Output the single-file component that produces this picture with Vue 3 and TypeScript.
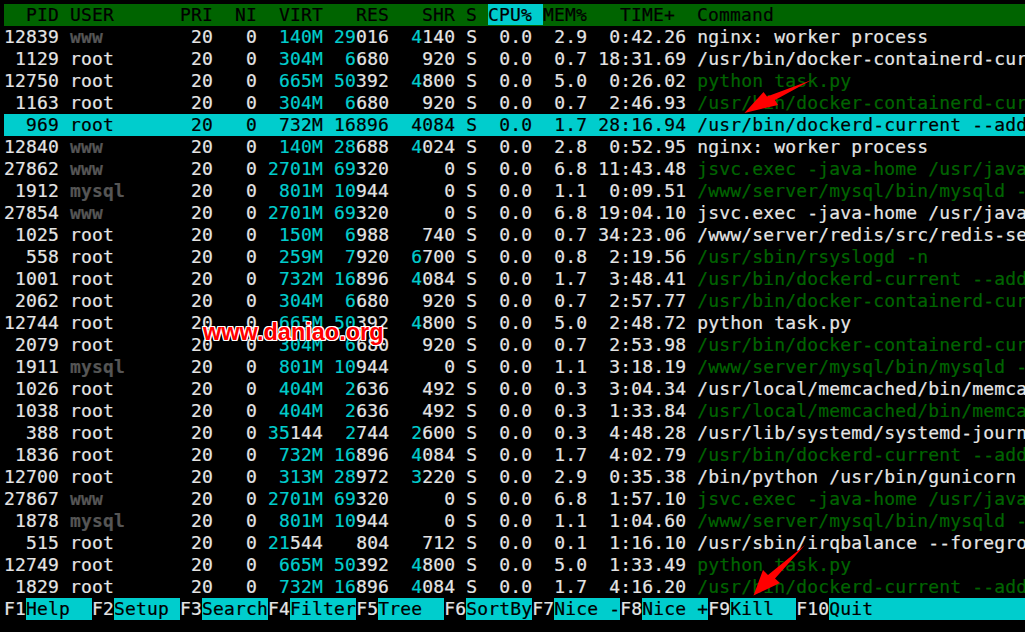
<script setup lang="ts">
interface Proc {
  pid: string
  user: string
  virt: string
  res: string
  shr: string
  mem: string
  time: string
  cmd: string
  thread?: boolean
  selected?: boolean
}

interface Seg {
  text: string
  cls: string
}

const docker = '/usr/bin/docker-containerd-cur'
const dockerd = '/usr/bin/dockerd-current --add'
const jsvc = 'jsvc.exec -java-home /usr/java'
const mysqld = '/www/server/mysql/bin/mysqld -'
const memc = '/usr/local/memcached/bin/memca'

const procs: Proc[] = [
  { pid: '12839', user: 'www', virt: '140M', res: '29016', shr: '4140', mem: '2.9', time: '0:42.26', cmd: 'nginx: worker process' },
  { pid: '1129', user: 'root', virt: '304M', res: '6680', shr: '920', mem: '0.7', time: '18:31.69', cmd: docker },
  { pid: '12750', user: 'root', virt: '665M', res: '50392', shr: '4800', mem: '5.0', time: '0:26.02', cmd: 'python task.py', thread: true },
  { pid: '1163', user: 'root', virt: '304M', res: '6680', shr: '920', mem: '0.7', time: '2:46.93', cmd: docker, thread: true },
  { pid: '969', user: 'root', virt: '732M', res: '16896', shr: '4084', mem: '1.7', time: '28:16.94', cmd: dockerd, selected: true },
  { pid: '12840', user: 'www', virt: '140M', res: '28688', shr: '4024', mem: '2.8', time: '0:52.95', cmd: 'nginx: worker process' },
  { pid: '27862', user: 'www', virt: '2701M', res: '69320', shr: '0', mem: '6.8', time: '11:43.48', cmd: jsvc, thread: true },
  { pid: '1912', user: 'mysql', virt: '801M', res: '10944', shr: '0', mem: '1.1', time: '0:09.51', cmd: mysqld, thread: true },
  { pid: '27854', user: 'www', virt: '2701M', res: '69320', shr: '0', mem: '6.8', time: '19:04.10', cmd: jsvc },
  { pid: '1025', user: 'root', virt: '150M', res: '6988', shr: '740', mem: '0.7', time: '34:23.06', cmd: '/www/server/redis/src/redis-se' },
  { pid: '558', user: 'root', virt: '259M', res: '7920', shr: '6700', mem: '0.8', time: '2:19.56', cmd: '/usr/sbin/rsyslogd -n', thread: true },
  { pid: '1001', user: 'root', virt: '732M', res: '16896', shr: '4084', mem: '1.7', time: '3:48.41', cmd: dockerd, thread: true },
  { pid: '2062', user: 'root', virt: '304M', res: '6680', shr: '920', mem: '0.7', time: '2:57.77', cmd: docker, thread: true },
  { pid: '12744', user: 'root', virt: '665M', res: '50392', shr: '4800', mem: '5.0', time: '2:48.72', cmd: 'python task.py' },
  { pid: '2079', user: 'root', virt: '304M', res: '6680', shr: '920', mem: '0.7', time: '2:53.98', cmd: docker, thread: true },
  { pid: '1911', user: 'mysql', virt: '801M', res: '10944', shr: '0', mem: '1.1', time: '3:18.19', cmd: mysqld, thread: true },
  { pid: '1026', user: 'root', virt: '404M', res: '2636', shr: '492', mem: '0.3', time: '3:04.34', cmd: memc },
  { pid: '1038', user: 'root', virt: '404M', res: '2636', shr: '492', mem: '0.3', time: '1:33.84', cmd: memc, thread: true },
  { pid: '388', user: 'root', virt: '35144', res: '2744', shr: '2600', mem: '0.3', time: '4:48.28', cmd: '/usr/lib/systemd/systemd-journ' },
  { pid: '1836', user: 'root', virt: '732M', res: '16896', shr: '4084', mem: '1.7', time: '4:02.79', cmd: dockerd, thread: true },
  { pid: '12700', user: 'root', virt: '313M', res: '28972', shr: '3220', mem: '2.9', time: '0:35.38', cmd: '/bin/python /usr/bin/gunicorn' },
  { pid: '27867', user: 'www', virt: '2701M', res: '69320', shr: '0', mem: '6.8', time: '1:57.10', cmd: jsvc, thread: true },
  { pid: '1878', user: 'mysql', virt: '801M', res: '10944', shr: '0', mem: '1.1', time: '1:04.60', cmd: mysqld, thread: true },
  { pid: '515', user: 'root', virt: '21544', res: '804', shr: '712', mem: '0.1', time: '1:16.10', cmd: '/usr/sbin/irqbalance --foregro' },
  { pid: '12749', user: 'root', virt: '665M', res: '50392', shr: '4800', mem: '5.0', time: '1:33.49', cmd: 'python task.py', thread: true },
  { pid: '1829', user: 'root', virt: '732M', res: '16896', shr: '4084', mem: '1.7', time: '4:16.20', cmd: dockerd, thread: true },
]

const keys = [
  { key: 'F1', label: 'Help  ' },
  { key: 'F2', label: 'Setup ' },
  { key: 'F3', label: 'Search' },
  { key: 'F4', label: 'Filter' },
  { key: 'F5', label: 'Tree  ' },
  { key: 'F6', label: 'SortBy' },
  { key: 'F7', label: 'Nice -' },
  { key: 'F8', label: 'Nice +' },
  { key: 'F9', label: 'Kill  ' },
]

const headLeft = '  PID USER      PRI  NI  VIRT   RES   SHR S '
const headSort = 'CPU% '
const headRight = 'MEM%   TIME+  Command'

const prefix = (p: Proc) => p.pid.padStart(5) + ' '
const nice = '  20   0'
const suffix = (p: Proc) => ` S  0.0  ${p.mem} ${p.time.padStart(8)} `

// htop highlights the thousands / mega part of a memory column in cyan.
function mem(value: string, width: number): Seg[] {
  const pad = ' '.repeat(width - value.length)
  if (value.endsWith('M')) return [{ text: pad + value, cls: 'cy' }]
  const head = value.slice(0, -3)
  const tail = value.slice(-3)
  return [
    { text: pad, cls: '' },
    { text: head, cls: 'cy' },
    { text: tail, cls: '' },
  ]
}

function memCols(p: Proc): Seg[] {
  return [
    { text: ' ', cls: '' },
    ...mem(p.virt, 5),
    { text: ' ', cls: '' },
    ...mem(p.res, 5),
    { text: ' ', cls: '' },
    ...mem(p.shr, 5),
  ]
}
</script>

<template>
  <div class="screen">
    <div class="row head"><span>{{ headLeft }}</span><span class="sort">{{ headSort }}</span><span>{{ headRight }}</span></div>

    <div v-for="p in procs" :key="p.pid" class="row" :class="{ sel: p.selected }">
      <span>{{ prefix(p) }}</span><span :class="{ dim: p.user !== 'root' }">{{ p.user.padEnd(9) }}</span><span>{{ nice }}</span><span v-for="(s, i) in memCols(p)" :key="i" :class="s.cls">{{ s.text }}</span><span>{{ suffix(p) }}</span><span :class="{ thr: p.thread }">{{ p.cmd }}</span>
    </div>

    <div class="row foot">
      <template v-for="k in keys" :key="k.key"><span>{{ k.key }}</span><span class="lab">{{ k.label }}</span></template><span>F10</span><span class="lab rest">Quit</span>
    </div>

    <svg class="arrows" width="1025" height="632" viewBox="0 0 1025 632" aria-hidden="true">
      <polygon fill="#ff0000" points="811.7,80 775,100 778,105 744.5,113 763.5,92 767,96.5" />
      <polygon fill="#ff0000" points="805,545 775,578.5 780,583 753.5,595.5 763,570 768,575" />
    </svg>
    <div class="mark">www.daniao.org</div>
  </div>
</template>

<style scoped>
.screen {
  position: relative;
  width: 1025px;
  height: 632px;
  box-sizing: border-box;
  padding: 4px 0 0 4px;
  overflow: hidden;
  background: #000;
  color: #e5e5e5;
  font-family: "DejaVu Sans Mono", monospace;
  font-size: 18px;
  letter-spacing: 0.164px;
  -webkit-text-stroke: 0.2px currentColor;
}

.row {
  height: 22px;
  line-height: 22px;
  white-space: pre;
  overflow: hidden;
}

.head {
  background: #006400;
  color: #000;
}

.sort {
  background: #00cdcd;
}

.cy {
  color: #00cdcd;
}

.dim {
  color: #555;
  font-weight: bold;
}

.thr {
  color: #006400;
}

.sel {
  background: #00cdcd;
  color: #000;
}

.sel .cy,
.sel .dim,
.sel .thr {
  color: #000;
}

.foot {
  display: flex;
}

.lab {
  background: #00cdcd;
  color: #000;
}

.rest {
  flex: 1;
}

.arrows {
  position: absolute;
  left: 0;
  top: 0;
}

.mark {
  position: absolute;
  left: 203px;
  top: 319px;
  color: #ff0000;
  font-family: "Liberation Sans", sans-serif;
  font-size: 23.5px;
  font-weight: bold;
  letter-spacing: 0;
  line-height: 26px;
  -webkit-text-stroke: 0;
  text-shadow: 1px 0 #fff, -1px 0 #fff, 0 1px #fff, 0 -1px #fff, 1px 1px #fff, -1px -1px #fff, 1px -1px #fff, -1px 1px #fff;
}
</style>

<style>
html,
body {
  background: #000;
}
</style>
